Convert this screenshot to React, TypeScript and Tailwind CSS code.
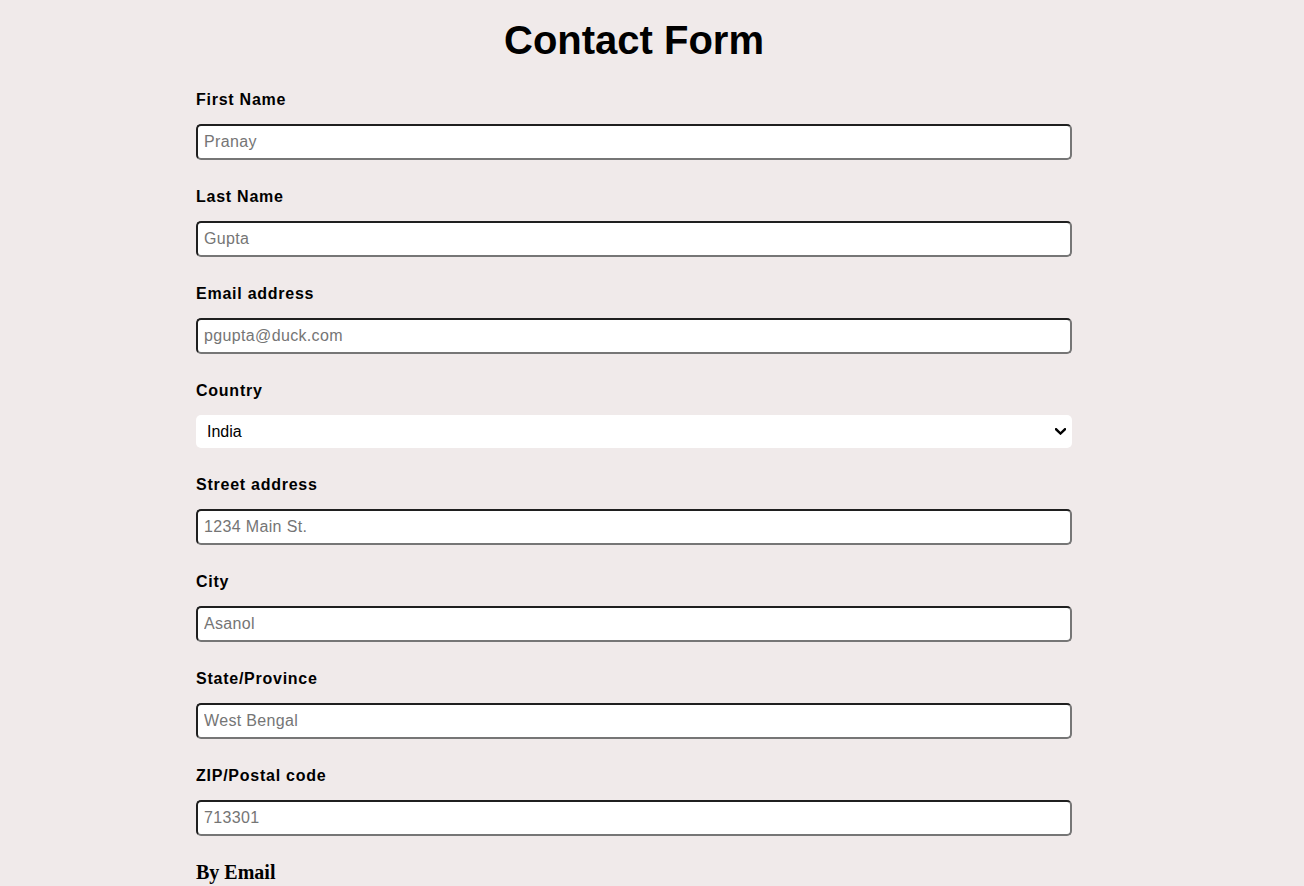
import React from "react";

const fields: { label: string; placeholder: string }[] = [
  { label: "First Name", placeholder: "Pranay" },
  { label: "Last Name", placeholder: "Gupta" },
  { label: "Email address", placeholder: "pgupta@duck.com" },
];

const fields2: { label: string; placeholder: string }[] = [
  { label: "Street address", placeholder: "1234 Main St." },
  { label: "City", placeholder: "Asanol" },
  { label: "State/Province", placeholder: "West Bengal" },
  { label: "ZIP/Postal code", placeholder: "713301" },
];

function Field({ label, placeholder }: { label: string; placeholder: string }) {
  return (
    <div className="flex flex-col">
      <label className="text-[16px] font-bold leading-[18px] tracking-[0.75px] text-black">{label}</label>
      <input
        type="text"
        placeholder={placeholder}
        className="mt-[15px] h-[36px] w-full rounded-[5px] border-2 border-t-[#1f1f1f] border-l-[#1f1f1f] border-b-[#767676] border-r-[#767676] bg-white px-[6px] text-[16px] tracking-[0.35px] text-black placeholder:text-[#757575] outline-none"
      />
    </div>
  );
}

export default function App() {
  return (
    <div className="min-h-[886px] w-full bg-[#f0eaea] font-['Liberation_Sans',Arial,sans-serif]">
      <div className="ml-[196px] flex w-[876px] flex-col gap-[28px] pt-[17px]">
        <h1 className="text-center text-[40px] font-bold leading-[46px] text-black">Contact Form</h1>
        {fields.map((f) => (
          <Field key={f.label} {...f} />
        ))}
        <div className="flex flex-col">
          <label className="text-[16px] font-bold leading-[18px] tracking-[0.75px] text-black">Country</label>
          <div className="relative mt-[15px]">
            <select
              defaultValue="India"
              className="h-[33px] w-full appearance-none rounded-[5px] border-0 bg-white pl-[11px] pr-[24px] text-[16px] text-black outline-none"
            >
              <option>India</option>
              <option>United States</option>
              <option>United Kingdom</option>
            </select>
            <svg
              className="pointer-events-none absolute right-[6px] top-[13px]"
              width="11"
              height="7"
              viewBox="0 0 11 7"
              fill="none"
            >
              <path d="M1 1.2 L5.5 5.5 L10 1.2" stroke="#000" strokeWidth="2.4" strokeLinecap="square" />
            </svg>
          </div>
        </div>
        {fields2.map((f) => (
          <Field key={f.label} {...f} />
        ))}
        <h3 className="-mt-[3px] font-['Liberation_Serif','Times_New_Roman',serif] text-[20px] font-bold leading-[23px] text-black">
          By Email
        </h3>
      </div>
    </div>
  );
}
